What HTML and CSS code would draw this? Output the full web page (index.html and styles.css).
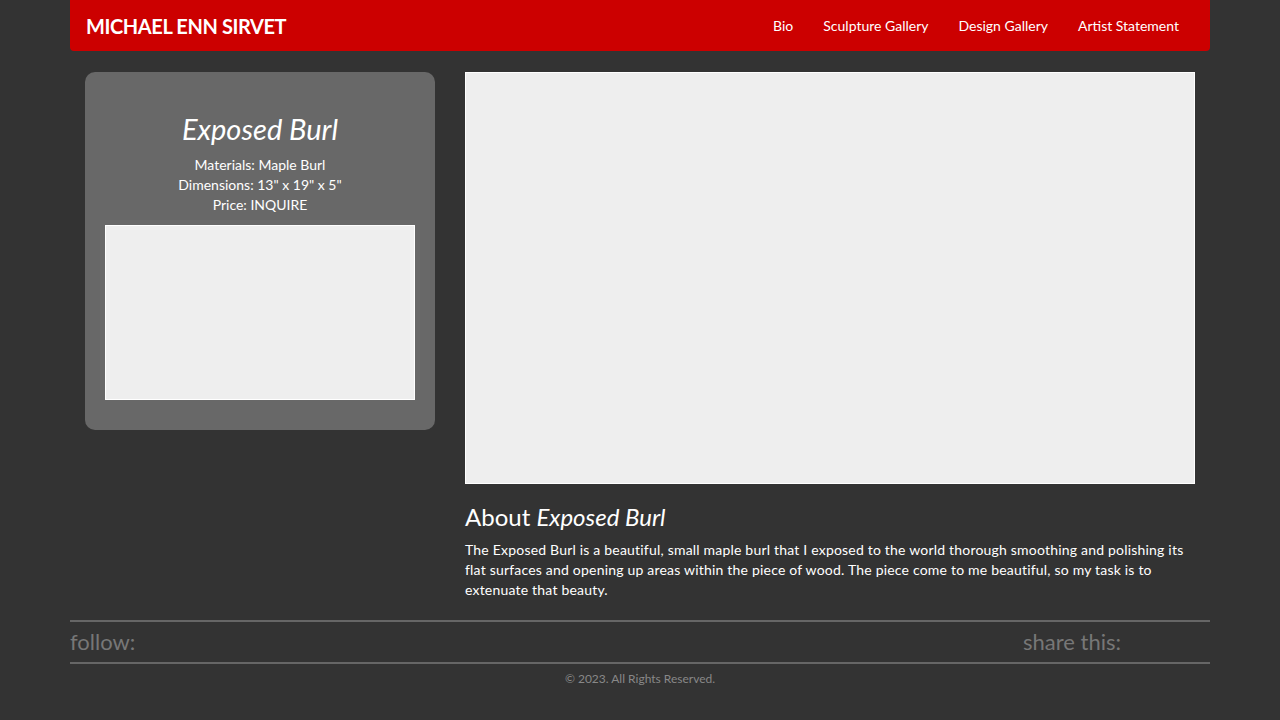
FILE: index.html
```html
<!DOCTYPE html>
<html lang="en">
<head>
<meta charset="utf-8">
<title>Exposed Burl - Michael Enn Sirvet</title>
<link rel="stylesheet" href="styles.css">
</head>
<body>
<div class="container">
  <header class="navbar">
    <a class="brand" href="#">MICHAEL ENN SIRVET</a>
    <nav class="nav">
      <a href="#">Bio</a>
      <a href="#">Sculpture Gallery</a>
      <a href="#">Design Gallery</a>
      <a href="#">Artist Statement</a>
    </nav>
  </header>
  <main class="row">
    <aside class="col-side">
      <div class="card">
        <h1 class="card-title">Exposed Burl</h1>
        <p class="meta">Materials: Maple Burl<br>Dimensions: 13" x 19" x 5"<br>Price: INQUIRE</p>
        <div class="thumb"></div>
      </div>
    </aside>
    <section class="col-main">
      <div class="hero"></div>
      <h2 class="about">About <em>Exposed Burl</em></h2>
      <p class="desc">The Exposed Burl is a beautiful, small maple burl that I exposed to the world thorough smoothing and polishing its flat surfaces and opening up areas within the piece of wood. The piece come to me beautiful, so my task is to extenuate that beauty.</p>
    </section>
  </main>
  <footer class="footer">
    <div class="social">
      <span class="follow">follow:</span>
      <span class="share">share this:</span>
    </div>
    <p class="copy">© 2023. All Rights Reserved.</p>
  </footer>
</div>
</body>
</html>
```
FILE: styles.css
```css
* { box-sizing: border-box; }
html, body { margin: 0; padding: 0; }
body {
  background: #333333;
  color: #ffffff;
  font-family: Lato, "Open Sans", sans-serif;
  font-size: 14px;
  line-height: 20px;
}
.container {
  width: 1140px;
  margin: 0 auto;
}
.navbar {
  height: 51px;
  background: #cc0000;
  border-radius: 0 0 4px 4px;
  display: flex;
  align-items: center;
  justify-content: space-between;
  padding: 0 16px;
}
.brand {
  color: #fff;
  text-decoration: none;
  font-weight: 700;
  font-size: 20px;
  letter-spacing: -0.4px;
}
.nav { display: flex; }
.nav a {
  color: #fff;
  text-decoration: none;
  font-size: 14px;
  padding: 0 15px;
}
.row {
  display: flex;
  padding-top: 21px;
}
.col-side {
  width: 380px;
  padding: 0 15px;
}
.col-main {
  width: 760px;
  padding: 0 15px;
}
.card {
  background: #686868;
  border-radius: 10px;
  padding: 20px 20px 30px;
  text-align: center;
}
.card-title {
  margin: 20px 0 10px;
  font-size: 29px;
  font-style: italic;
  font-weight: 400;
  line-height: 33px;
}
.meta {
  margin: 0 0 10px;
  font-size: 14px;
  line-height: 20px;
}
.thumb {
  height: 175px;
  background: #eeeeee;
  border: 1px solid #ffffff;
}
.hero {
  height: 412px;
  background: #eeeeee;
  border: 1px solid #ffffff;
}
.about {
  margin: 20px 0 10px;
  font-size: 24px;
  font-weight: 400;
  line-height: 26px;
}
.desc {
  margin: 0;
  font-size: 14px;
  line-height: 20px;
  letter-spacing: 0.2px;
}
.footer {
  margin-top: 20px;
}
.social {
  border-top: 2px solid #666666;
  border-bottom: 2px solid #666666;
  display: flex;
  height: 44px;
  align-items: center;
  font-size: 22px;
  color: #777777;
}
.follow { flex: 1; }
.share { width: 187px; }
.copy {
  margin: 7px 0 0;
  text-align: center;
  font-size: 12px;
  color: #888888;
  line-height: 16px;
}
```
